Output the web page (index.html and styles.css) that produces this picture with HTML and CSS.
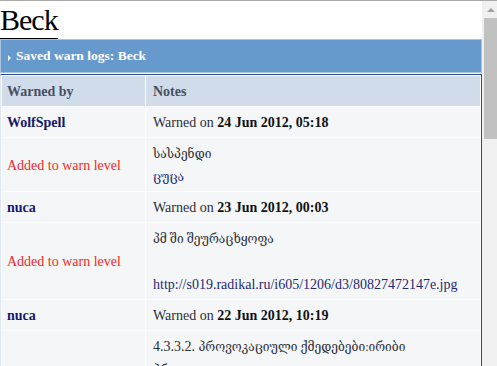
FILE: index.html
```html
<!DOCTYPE html>
<html lang="en">
<head>
  <meta charset="utf-8">
  <title>Beck - Saved warn logs</title>
  <link rel="stylesheet" href="styles.css">
</head>
<body>
  <div class="page">
    <!-- main column -->
    <div class="main">
      <h1 class="title">Beck</h1>

      <div class="panel-head"><span class="arrow"></span>Saved warn logs: Beck</div>

      <table class="warns">
        <thead>
          <tr><th class="who">Warned by</th><th>Notes</th></tr>
        </thead>
        <tbody>
          <tr><td><a class="user">WolfSpell</a></td><td>Warned on <b>24 Jun 2012, 05:18</b></td></tr>
          <tr><td class="level">Added to warn level</td><td><span class="ka">სასპენდი</span><br><span class="ka link">ცუცა</span></td></tr>
          <tr><td><a class="user">nuca</a></td><td>Warned on <b>23 Jun 2012, 00:03</b></td></tr>
          <tr><td class="level">Added to warn level</td><td><span class="ka">პმ ში შეურაცხყოფა</span><br><br><span class="link">http://s019.radikal.ru/i605/1206/d3/80827472147e.jpg</span></td></tr>
          <tr><td><a class="user">nuca</a></td><td>Warned on <b>22 Jun 2012, 10:19</b></td></tr>
          <tr><td class="level"></td><td>4.3.3.2. <span class="ka">პროვოკაციული ქმედებები:ირიბი</span><br><span class="ka">პროვოკაცია</span></td></tr>
        </tbody>
      </table>
    </div>

    <!-- window scrollbar -->
    <div class="scrollbar">
      <div class="up"><span></span></div>
      <div class="thumb"></div>
    </div>
  </div>
</body>
</html>
```

FILE: styles.css
```css
/* page */
html, body { margin: 0; padding: 0; }
body {
  font-family: "Liberation Serif", "DejaVu Serif", serif;
  font-size: 14px;
  color: #2b2f3a;
  background: #fff;
  border-top: 1px solid #a9a9a9;
  overflow: hidden;
  height: 365px;
}
.page { display: flex; height: 365px; }
.main { width: 482px; overflow: hidden; }

/* title */
.title {
  display: inline-block;
  margin: 0;
  font-size: 30px;
  font-weight: normal;
  letter-spacing: -1px;
  line-height: 37px;
  color: #000;
  border-bottom: 1px solid #000;
}

/* blue panel header */
.panel-head {
  height: 32px;
  line-height: 32px;
  padding-left: 7px;
  margin-bottom: 1px;
  background: #6699cc;
  border: 1px solid #a9c3df;
  color: #fff;
  font-weight: bold;
  font-size: 13.5px;
}
.arrow {
  display: inline-block;
  width: 0; height: 0;
  border-left: 3px solid #fff;
  border-top: 3px solid transparent;
  border-bottom: 3px solid transparent;
  margin-right: 5px;
  vertical-align: -1px;
}

/* warn table */
.warns {
  width: 482px;
  border: 1px solid #2e4c89;
  border-left-color: #dfe6ef;
  border-spacing: 1px;
  background: #fbfcfd;
  table-layout: fixed;
}
.warns th, .warns td {
  padding: 4px 7px 3px;
  line-height: 23px;
  text-align: left;
  vertical-align: middle;
}
.warns th:first-child, .warns td:first-child { padding-left: 5px; }
.warns th {
  background: #d0dce9;
  color: #474f62;
  font-weight: bold;
}
.warns th.who { width: 131px; }
.warns td { background: #f4f6f7; }
.warns td b { color: #111; }
.user { color: #17186e; font-weight: bold; }
.level { color: #ff1f1f; }
.link { color: #1f2a72; }
/* georgian notes */
.ka { font-size: 12px; line-height: 1; }

/* fake scrollbar */
.scrollbar {
  width: 15px;
  background: #f0f0f0;
  display: flex;
  flex-direction: column;
  align-items: flex-end;
}
.up {
  width: 13px;
  height: 17px;
  display: flex;
  align-items: center;
  justify-content: center;
}
.up span {
  width: 0; height: 0;
  border-bottom: 4px solid #a3a3a3;
  border-left: 4px solid transparent;
  border-right: 4px solid transparent;
}
.thumb {
  width: 13px;
  height: 121px;
  background: #c1c1c1;
}
```
